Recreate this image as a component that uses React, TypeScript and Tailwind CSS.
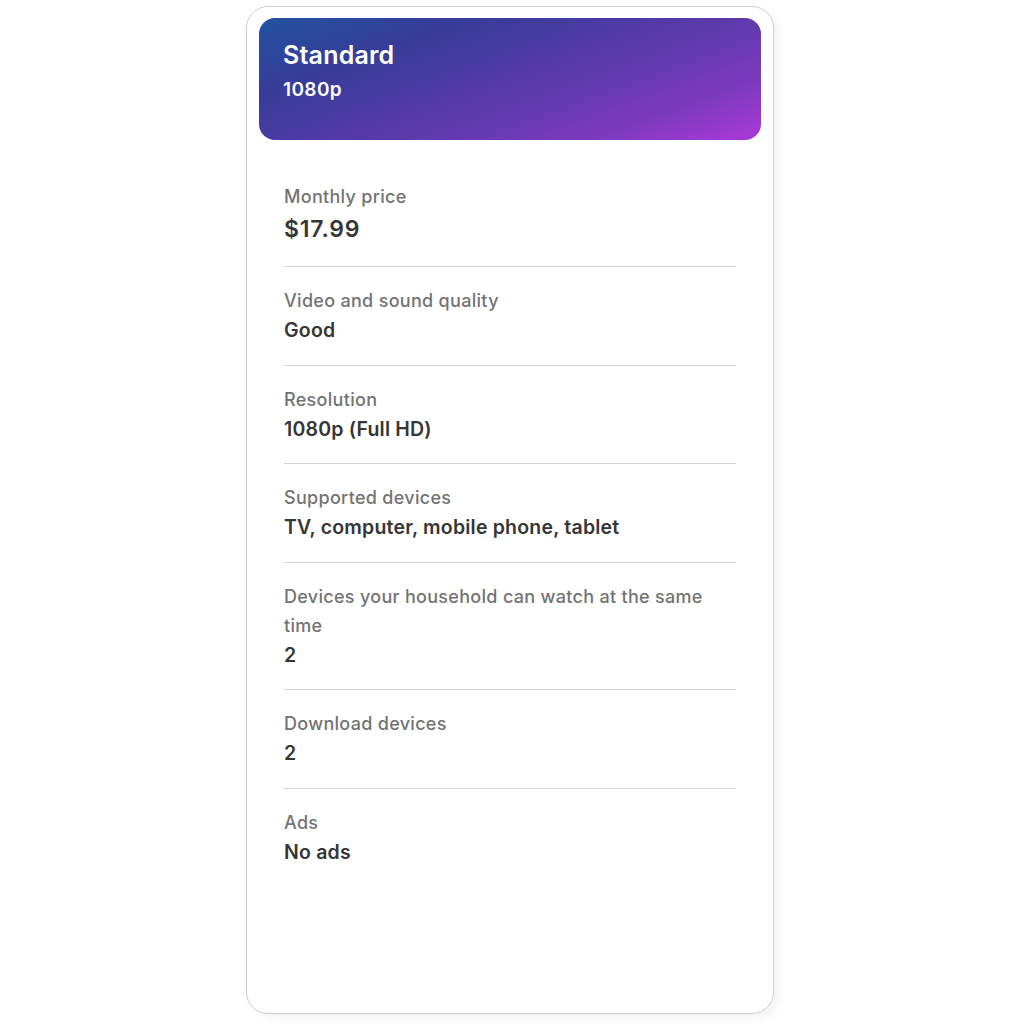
const rows = [
  { label: 'Video and sound quality', value: 'Good' },
  { label: 'Resolution', value: '1080p (Full HD)' },
  { label: 'Supported devices', value: 'TV, computer, mobile phone, tablet' },
  { label: 'Devices your household can watch at the same time', value: '2' },
  { label: 'Download devices', value: '2' },
  { label: 'Ads', value: 'No ads' },
]

export default function App() {
  return (
    <div className="min-h-[1024px] w-[1024px] bg-white pt-[6px] pl-[246px]" style={{ fontFamily: 'Inter, "Noto Sans", sans-serif' }}>
      <div className="w-[528px] h-[1008px] rounded-[22px] border border-[#cfcfcf] bg-white shadow-[5px_4px_8px_rgba(0,0,0,0.05)] px-[12px] pt-[11px]">
        <div className="h-[122px] rounded-[16px] bg-[linear-gradient(160deg,#2252a0_0%,#373c98_25%,#5a3aaa_55%,#7d3abf_80%,#ab38d8_100%)] px-[24px] pt-[21px] text-white">
          <div className="text-[25px] font-semibold leading-[32px] tracking-[0.2px]">Standard</div>
          <div className="text-[19px] font-semibold leading-[24px] mt-[7px] tracking-[0.4px]">1080p</div>
        </div>
        <div className="px-[25px] pt-[23px]">
          <div className="border-b border-[#d4d4d4] pt-[19px] pb-[19px]">
            <div className="text-[18px] font-medium leading-[29px] tracking-[0.3px] text-[#737373]">Monthly price</div>
            <div className="text-[23px] font-semibold leading-[36px] tracking-[0.8px] text-[#363636]">$17.99</div>
          </div>
          {rows.map((r, i) => (
            <div key={r.label} className={`${i < rows.length - 1 ? 'border-b border-[#d4d4d4]' : ''} pt-[19px] pb-[19.5px]`}>
              <div className="text-[18px] font-medium leading-[29px] tracking-[0.3px] text-[#737373]">{r.label}</div>
              <div className="text-[19.5px] font-semibold leading-[30px] tracking-[0.2px] text-[#363636]">{r.value}</div>
            </div>
          ))}
        </div>
      </div>
    </div>
  )
}
